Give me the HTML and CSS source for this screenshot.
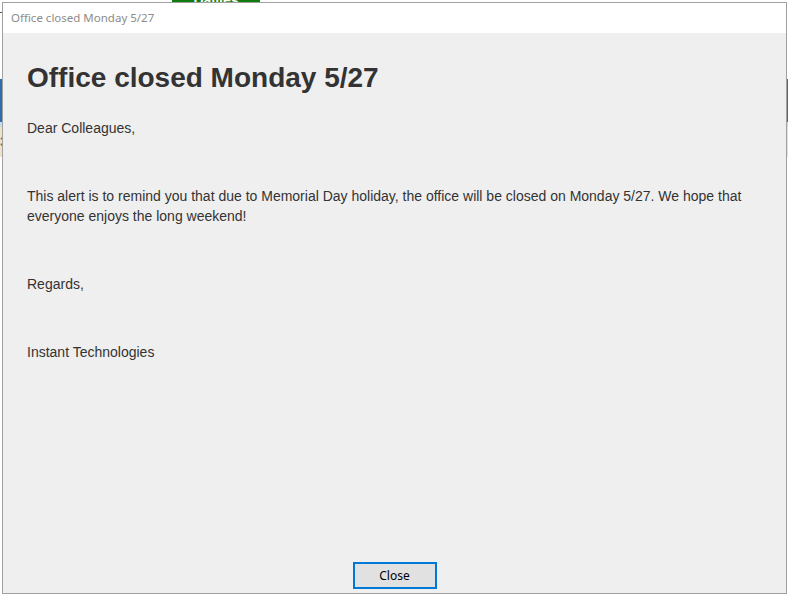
FILE: index.html
```html
<!DOCTYPE html>
<html lang="en">
<head>
  <meta charset="UTF-8" />
  <meta name="viewport" content="width=device-width, initial-scale=1" />
  <title>Office closed Monday 5/27</title>
  <link rel="stylesheet" href="styles.css">
</head>
<body>
  <div class="page">
    <div class="page-top">
      <span class="page-tab">Dailies</span>
    </div>
    <div class="page-rule"></div>
    <div class="page-band"></div>
    <div class="page-note">3</div>
  </div>

  <div class="dialog">
    <div class="dialog-title">Office closed Monday 5/27</div>
    <div class="dialog-body">
      <h1>Office closed Monday 5/27</h1>
      <p>Dear Colleagues,</p>
      <p>&nbsp;</p>
      <p>This alert is to remind you that due to Memorial Day holiday, the office will be closed on Monday 5/27. We hope that everyone enjoys the long weekend!</p>
      <p>&nbsp;</p>
      <p>Regards,</p>
      <p>&nbsp;</p>
      <p>Instant Technologies</p>
    </div>
    <div class="dialog-footer">
      <button class="close-btn" type="button">Close</button>
    </div>
  </div>
</body>
</html>
```

FILE: styles.css
```css
body {
  margin: 0;
  background: #ffffff;
  font-family: 'Liberation Sans', Arial, sans-serif;
  overflow: hidden;
}

.page {
  height: 595px;
}

.page-top {
  height: 20px;
  padding-left: 172px;
}

.page-tab {
  display: block;
  width: 88px;
  height: 12px;
  margin-top: -8px;
  background: #107c10;
  color: #ffffff;
  font-size: 14px;
  font-weight: bold;
  text-align: center;
}

.page-rule {
  height: 1px;
  background: #5a5a5a;
  width: 6px;
}

.page-band {
  margin-top: 66px;
  height: 43px;
  background: #2e6eae;
  border-bottom: 5px solid #c7d9ea;
}

.page-note {
  height: 30px;
  background: #ece3c8;
  font-size: 12px;
  line-height: 30px;
  color: #555;
}

.dialog {
  position: absolute;
  left: 2px;
  top: 2px;
  width: 783px;
  height: 590px;
  border: 1px solid #a0a0a0;
  background: #efefef;
  display: flex;
  flex-direction: column;
}

.dialog-title {
  height: 30px;
  flex-shrink: 0;
  background: #ffffff;
  color: #8c8c8c;
  font-family: 'Noto Sans', 'Open Sans', sans-serif;
  font-size: 11.5px;
  line-height: 30px;
  padding-left: 8px;
}

.dialog-body {
  flex: 1;
  padding: 29px 24px 0 24px;
  color: #333333;
  font-size: 14px;
  line-height: 20px;
}

.dialog-body h1 {
  margin: 0 0 24px;
  font-size: 28px;
  line-height: 32px;
  font-weight: bold;
  color: #333333;
}

.dialog-body p {
  margin: 0 0 14px;
}

.dialog-footer {
  display: flex;
  justify-content: center;
  padding-bottom: 4px;
}

.close-btn {
  width: 84px;
  height: 27px;
  background: #e1e1e1;
  border: 2px solid #0078d7;
  border-radius: 0;
  font-family: 'Noto Sans', 'Open Sans', sans-serif;
  font-size: 12px;
  color: #000000;
  padding: 0;
}
```
